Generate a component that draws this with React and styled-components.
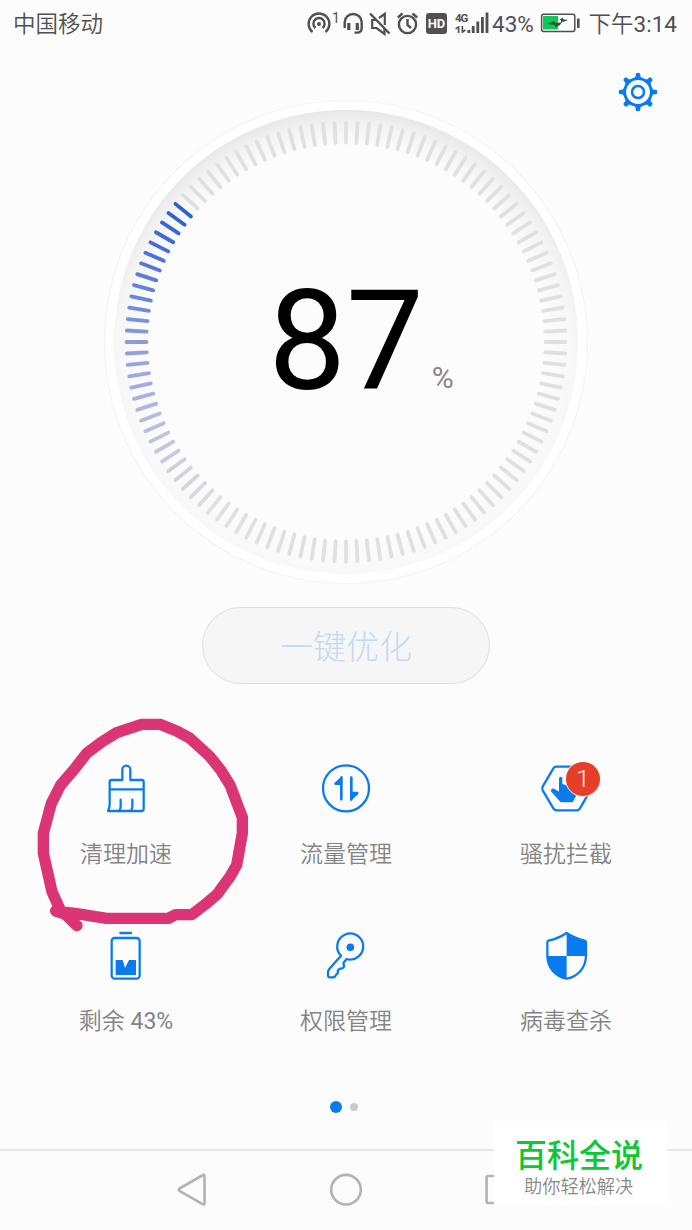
import React from "react";
import styled, { createGlobalStyle } from "styled-components";

const BLUE = "#0a7bee";
const INK = "#505050";

const GlobalStyle = createGlobalStyle`
  * { box-sizing: border-box; }
  body {
    margin: 0;
    background: #fcfcfc;
    font-family: Roboto, "Noto Sans CJK SC", sans-serif;
  }
`;

const Screen = styled.main`
  position: relative;
  display: flex;
  flex-direction: column;
  width: 692px;
  height: 1230px;
  overflow: hidden;
  background: #fcfcfc;
`;

const StatusBar = styled.header`
  display: flex;
  align-items: center;
  height: 48px;
  padding: 0 15px 0 13px;
  color: ${INK};
  font-size: 22.5px;
  font-weight: 350;
  line-height: 48px;
  white-space: nowrap;
`;

const Carrier = styled.span`
  width: 294px;
  height: 48px;
`;

const Digits = styled.span`
  font-weight: 400;
`;

const StatusIcon = styled.svg`
  flex: none;
  width: ${(p) => p.$width}px;
  height: ${(p) => p.$height || 24}px;
  margin-right: ${(p) => p.$gap || 0}px;
  fill: none;
  stroke: ${INK};
  stroke-width: 2.4;
`;

const HotspotCount = styled.span`
  width: 11px;
  height: 24px;
  font-size: 14px;
  font-weight: 400;
  line-height: 12px;
`;

const HdBadge = styled.span`
  width: 21px;
  height: 21px;
  margin: -1px 8px 0 7px;
  border-radius: 3px;
  background: ${INK};
  color: #fcfcfc;
  font-size: 13px;
  font-weight: 700;
  line-height: 21px;
  text-align: center;
`;

const Network = styled.span`
  display: flex;
  flex-direction: column;
  width: 12px;
  height: 24px;
  font-size: 11.5px;
  font-weight: 700;
  line-height: 12px;
  letter-spacing: -1px;
`;

const BatteryLevel = styled.span`
  width: 51px;
  height: 48px;
  padding-left: 3px;
  font-weight: 400;
`;

const Clock = styled.span`
  height: 48px;
  margin-left: auto;
`;

const Hero = styled.section`
  display: grid;
  grid-template-columns: 692px;
  grid-template-rows: 500px;
  height: 559px;
  padding-top: 44px;
  justify-items: center;
  align-items: center;

  > * { grid-area: 1 / 1; }
`;

const Dial = styled.svg`
  width: 500px;
  height: 500px;
`;

const Score = styled.div`
  display: grid;
  grid-template-columns: 1fr auto 1fr;
  align-items: baseline;
  width: 400px;
  line-height: 160px;
`;

const ScoreValue = styled.strong`
  grid-column: 2;
  color: #000;
  font-size: 138.5px;
  font-weight: 400;
`;

const ScoreUnit = styled.span`
  padding-left: 8px;
  color: #868686;
  font-size: 30px;
  line-height: 40px;
  transform: translateY(-1px);
`;

const SettingsButton = styled.button`
  align-self: start;
  justify-self: end;
  width: 40px;
  height: 40px;
  margin: -20px 34px 0 0;
  padding: 0;
  border: 0;
  background: none;

  svg { display: block; width: 40px; height: 40px; }
`;

const OptimizeButton = styled.button`
  flex: none;
  align-self: center;
  width: 288px;
  height: 77px;
  padding: 0;
  border: 1px solid #dfdfdf;
  border-radius: 39px;
  background: #f6f6f6;
  color: #c2dbf3;
  font-family: "Noto Sans CJK SC", sans-serif;
  font-size: 33px;
  font-weight: 300;
  line-height: 75px;
`;

const Tiles = styled.section`
  display: grid;
  grid-template-columns: repeat(3, 220px);
  grid-auto-rows: 167px;
  justify-content: center;
  height: 334px;
  margin-top: 80px;
`;

const Tile = styled.div`
  display: flex;
  flex-direction: column;
  align-items: center;
  gap: 23px;
  color: #848484;
  font-size: 23px;
  font-weight: 350;
  line-height: 36px;
`;

const TileLabel = styled.span`
  white-space: pre;
`;

const TileIconBox = styled.div`
  position: relative;
  width: 50px;
  height: 50px;
`;

const TileIcon = styled.svg`
  display: block;
  width: 50px;
  height: 50px;
  overflow: visible;
  fill: none;
  stroke: ${BLUE};
  stroke-width: 6.8;
  stroke-linecap: round;
  stroke-linejoin: round;

  .solid { fill: ${BLUE}; stroke: none; }
`;

const Badge = styled.span`
  position: absolute;
  top: -3px;
  left: 24px;
  width: 36px;
  height: 36px;
  border: 1px solid #fcfcfc;
  border-radius: 50%;
  background: #e83d27;
  color: #fff;
  font-size: 24px;
  font-weight: 350;
  line-height: 35px;
  text-align: center;
`;

const Pager = styled.div`
  display: flex;
  align-items: center;
  justify-content: center;
  gap: 8px;
  height: 12px;
  margin-top: 3px;
  padding-right: 4px;
`;

const Dot = styled.i`
  width: ${(p) => (p.$active ? 12 : 8)}px;
  height: ${(p) => (p.$active ? 12 : 8)}px;
  border-radius: 50%;
  background: ${(p) => (p.$active ? BLUE : "#cbcbcb")};
`;

const NavBar = styled.nav`
  display: flex;
  align-items: center;
  justify-content: space-between;
  height: 81px;
  margin-top: auto;
  padding: 0 174px 2px;
  border-top: 2px solid #e8e8e8;

  svg {
    width: 34px;
    height: 34px;
    overflow: visible;
    fill: none;
    stroke: #b3b3b3;
    stroke-width: 2.6;
    stroke-linejoin: round;
  }
`;

const Scribble = styled.svg`
  position: absolute;
  top: 710px;
  left: 30px;
  width: 230px;
  height: 230px;
  overflow: visible;
  fill: none;
  stroke: #db3575;
  stroke-width: 34;
  stroke-linecap: round;
  stroke-linejoin: round;
`;

const Watermark = styled.aside`
  position: absolute;
  top: 1121px;
  left: 494px;
  width: 173px;
  height: 84px;
  padding: 14px 0 0 21px;
  background: #fff;
  font-family: "Noto Sans CJK SC", sans-serif;
  white-space: nowrap;
`;

const WatermarkTitle = styled.div`
  color: #0cc832;
  font-size: 32px;
  font-weight: 500;
  line-height: 36px;
`;

const WatermarkText = styled.div`
  margin-top: 4px;
  padding-left: 9px;
  color: #888;
  font-size: 18.2px;
  font-weight: 350;
  line-height: 20px;
`;

// Degrees above the left horizon mapped to the colour of the progress sweep.
const STOPS = [
  [39, [42, 96, 208]],
  [25, [72, 112, 216]],
  [0, [138, 155, 224]],
  [-21, [180, 186, 222]],
  [-36, [206, 206, 226]],
  [-51, [223, 223, 223]],
];

function tickColor(deg) {
  if (deg > 40 || deg <= -51) return "#e0e0e0";
  for (let i = 1; i < STOPS.length; i++) {
    const [a, ca] = STOPS[i - 1];
    const [b, cb] = STOPS[i];
    if (deg >= b) {
      const t = (a - deg) / (a - b);
      return `rgb(${ca.map((v, k) => Math.round(v + (cb[k] - v) * t)).join(",")})`;
    }
  }
  return "#e0e0e0";
}

function ScoreDial() {
  return (
    <Dial viewBox="0 0 500 500">
      <defs>
        <radialGradient id="rim" cx="250" cy="250" r="232" gradientUnits="userSpaceOnUse">
          <stop offset="0.85" stopColor="#000" stopOpacity="0" />
          <stop offset="0.93" stopColor="#000" stopOpacity="0.035" />
          <stop offset="1" stopColor="#000" stopOpacity="0.085" />
        </radialGradient>
        <linearGradient id="fade" x1="0" y1="0" x2="0" y2="1">
          <stop offset="0" stopColor="#fff" />
          <stop offset="0.2" stopColor="#fff" stopOpacity="0.85" />
          <stop offset="0.5" stopColor="#fff" stopOpacity="0.25" />
          <stop offset="1" stopColor="#fff" stopOpacity="0.18" />
        </linearGradient>
        <mask id="rimMask">
          <rect width="500" height="500" fill="url(#fade)" />
        </mask>
      </defs>
      <circle cx="250" cy="250" r="241.5" fill="#fefefe" stroke="#f4f4f4" strokeWidth="1.2" />
      <circle cx="250" cy="250" r="232" fill="#fcfcfc" />
      <circle cx="250" cy="250" r="232" fill="url(#rim)" mask="url(#rimMask)" />
      {Array.from({ length: 120 }, (_, i) => {
        const deg = i * 3 > 180 ? i * 3 - 360 : i * 3;
        return (
          <line
            key={i}
            x1="30.5"
            x2="50.5"
            y1="250"
            y2="250"
            stroke={tickColor(deg)}
            strokeWidth="3.8"
            strokeLinecap="round"
            transform={`rotate(${deg} 250 250)`}
          />
        );
      })}
    </Dial>
  );
}

function Gear() {
  return (
    <svg viewBox="414 217 120 120" fill="none" stroke={BLUE}>
      <circle cx="474" cy="277" r="40" strokeWidth="8.5" />
      <circle cx="474" cy="277" r="18" strokeWidth="7.5" />
      {[0, 45, 90, 135, 180, 225, 270, 315].map((a) => (
        <path
          key={a}
          d="M458 240 L467 230 V224 Q467 219 474 219 Q481 219 481 224 V230 L490 240 Z"
          fill={BLUE}
          stroke="none"
          transform={`rotate(${a} 474 277)`}
        />
      ))}
    </svg>
  );
}

const BrushIcon = () => (
  <TileIcon viewBox="213 162 150 150">
    <path d="M277 210 V179 a12 12 0 0 1 24 0 V210 H335 q6 0 6 6 V297 q0 6 -6 6 H234 Q239 294 239 282 V216 q0 -6 6 -6 Z M240 238 H340 M272 269 V288 Q272 297 268 302 M307 269 V288 Q307 297 303 302" />
  </TileIcon>
);

const TrafficIcon = () => (
  <TileIcon viewBox="93 72 150 150">
    <circle cx="168" cy="145" r="69" />
    <path d="M154 113 V178 M184 113 V178" strokeWidth="8" />
    <path className="solid" d="M157 107 L133 129 Q131 135 137 135 H157 Z M181 184 L205 162 Q207 155 201 155 H181 Z" />
  </TileIcon>
);

const BlockIcon = () => (
  <TileIcon viewBox="753 72 150 150">
    <path d="M799 80 H861 Q867 80 870 85 L901 140 Q904 145 901 151 L870 205 Q867 211 861 211 H799 Q793 211 790 205 L758 151 Q755 145 758 140 L790 85 Q793 80 799 80 Z" />
    <path className="solid" d="M807 116 Q807 110 812 110 Q817 110 817 116 V132 L858 145 V168 L848 187 H812 L784 155 Q781 150 785 147 Q789 144 795 148 L807 155 Z" />
  </TileIcon>
);

const BatteryIcon = () => (
  <TileIcon viewBox="123 93 150 150">
    <path d="M181 99 H213" strokeWidth="7" />
    <rect x="155" y="114" width="84" height="122" rx="9" />
    <path className="solid" d="M167 180 H188 L195 204 L207 180 H228 V225 H167 Z" />
  </TileIcon>
);

const KeyIcon = () => (
  <TileIcon viewBox="783 93 150 150">
    <path d="M843 167 A39 39 0 1 1 860 177 L850 189 Q855 201 847 205 Q835 206 833 213 Q836 219 830 222 L825 230 Q823 232 820 232 H809 Q804 232 804 226 V216 Q804 212 807 208 L837 174 Q841 171 843 167 Z" />
    <circle className="solid" cx="871" cy="142" r="11.5" />
  </TileIcon>
);

const ShieldIcon = () => (
  <TileIcon viewBox="183 63 150 150">
    <path d="M260 69 Q236 85 206 92 Q202 93 202 98 V135 C202 173 225 199 260 206 C295 199 318 173 318 135 V98 Q318 93 314 92 Q284 85 260 69 Z" />
    <path className="solid" d="M260 69 Q284 85 318 94 V138 H260 Z M260 138 V206 C225 199 202 173 202 138 Z" />
  </TileIcon>
);

const TILES = [
  { label: "清理加速", Icon: BrushIcon },
  { label: "流量管理", Icon: TrafficIcon },
  { label: "骚扰拦截", Icon: BlockIcon, badge: 1 },
  { label: "剩余 ", digits: "43%", Icon: BatteryIcon },
  { label: "权限管理", Icon: KeyIcon },
  { label: "病毒查杀", Icon: ShieldIcon },
];

function StatusIcons() {
  return (
    <>
      <StatusIcon $width={25} viewBox="307 12 25 24">
        <path d="M312.5 32 A10.4 10.4 0 1 1 325.5 32" />
        <path d="M315.5 28 A5.6 5.6 0 1 1 322.5 28" />
        <circle cx="319" cy="24" r="2" fill={INK} stroke="none" />
      </StatusIcon>
      <HotspotCount>1</HotspotCount>
      <StatusIcon $width={20} $gap={6} viewBox="343 12 20 24">
        <path d="M344.7 28 V22 A8.5 8 0 0 1 361.7 22 V28 Q361.7 32.6 357 32.6 H354.5" />
        <path d="M348.8 23 V30 M357.3 23 V30" strokeWidth="3.2" />
      </StatusIcon>
      <StatusIcon $width={22} $gap={5} viewBox="369 12 22 24">
        <path d="M370 13.5 L389.5 33.5" />
        <path d="M376 20 H372.2 V28 H376.5 L384.5 34 V29 M379 18 L384.8 13.8 V25" strokeWidth="2.2" />
      </StatusIcon>
      <StatusIcon $width={23} viewBox="396 12 23 24">
        <circle cx="407.5" cy="24.5" r="8.6" />
        <path d="M407.5 19 V25 L411 28 M397.8 17.5 L402.5 13.5 M412.5 13.5 L417.2 17.5" />
      </StatusIcon>
      <HdBadge>HD</HdBadge>
      <Network>
        4G
        <StatusIcon $width={12} $height={12} viewBox="455 24 12 12">
          <path d="M458.6 26 V33 M455.6 28.8 L458.6 26.6 M462.4 26 V33 M465.4 30 L462.4 32.2" strokeWidth="1.6" />
        </StatusIcon>
      </Network>
      <StatusIcon $width={22} viewBox="467 12 22 24">
        <path d="M468.8 30 V33 M473.2 26 V33 M477.8 21.5 V33 M482.4 17 V33 M487 12.5 V33" strokeWidth="2.8" />
      </StatusIcon>
    </>
  );
}

export default function App() {
  return (
    <Screen>
      <GlobalStyle />
      <StatusBar>
        <Carrier>中国移动</Carrier>
        <StatusIcons />
        <BatteryLevel>43%</BatteryLevel>
        <StatusIcon $width={40} viewBox="540 12 40 24">
          <rect x="541.6" y="14.2" width="33.2" height="17.2" rx="2" strokeWidth="1.5" />
          <rect x="543" y="16" width="15" height="13.5" fill="#0fc85a" stroke="none" />
          <path d="M578.3 18.5 V28" strokeWidth="2.6" />
          <path
            d="M547 24 L555 21 V23 L561 22.5 V20 L559 20 L563 17.5 V19.2 L568 20 L563 22 V21 L560 25 L555 27.5 V25 Z"
            fill="#34503e"
            stroke="none"
          />
        </StatusIcon>
        <Clock>
          下午<Digits>3:14</Digits>
        </Clock>
      </StatusBar>

      <Hero>
        <ScoreDial />
        <Score>
          <ScoreValue>87</ScoreValue>
          <ScoreUnit>%</ScoreUnit>
        </Score>
        <SettingsButton aria-label="设置">
          <Gear />
        </SettingsButton>
      </Hero>

      <OptimizeButton>一键优化</OptimizeButton>

      <Tiles>
        {TILES.map(({ label, digits, Icon, badge }) => (
          <Tile key={label}>
            <TileIconBox>
              <Icon />
              {badge && <Badge>{badge}</Badge>}
            </TileIconBox>
            <TileLabel>
              {label}
              {digits && <Digits>{digits}</Digits>}
            </TileLabel>
          </Tile>
        ))}
      </Tiles>

      <Pager>
        <Dot $active />
        <Dot />
      </Pager>

      <NavBar>
        <svg viewBox="174 1173 34 34">
          <path d="M179.5 1188.5 L203 1175 Q204.5 1174.4 204.5 1176 V1203.3 Q204.5 1205 203 1204.3 L179.5 1190.8 Q178 1189.7 179.5 1188.5 Z" />
        </svg>
        <svg viewBox="329 1173 34 34">
          <circle cx="346" cy="1189.7" r="14.8" />
        </svg>
        <svg viewBox="484 1173 34 34">
          <rect x="486.6" y="1176" width="27" height="27" rx="1.5" />
        </svg>
      </NavBar>

      <Scribble viewBox="0 0 690 690">
        <path d="M141 647 L105 612 L77 603 L140 611 L230 625 H415 L437 614 H485 L530 580 L563 551 L600 500 L620 465 L637 370 V322 L600 225 L572 180 L540 140 L480 85 L440 63 L390 43 H335 L260 68 L215 96 L170 130 L135 175 L92 225 L64 280 L40 370 V430 L66 545 L90 598" />
      </Scribble>

      <Watermark>
        <WatermarkTitle>百科全说</WatermarkTitle>
        <WatermarkText>助你轻松解决</WatermarkText>
      </Watermark>
    </Screen>
  );
}
